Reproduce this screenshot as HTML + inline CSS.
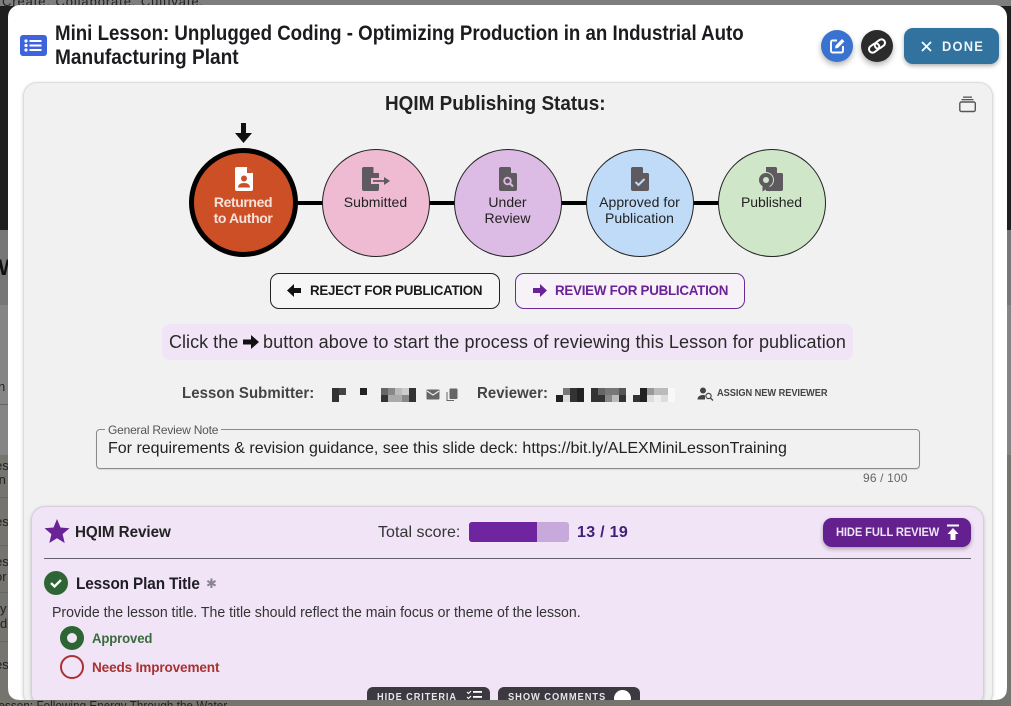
<!DOCTYPE html>
<html><head><meta charset="utf-8"><style>
html,body{margin:0;padding:0;overflow:hidden;width:1011px;height:706px}
body{position:relative;background:#7f7f7f;font-family:"Liberation Sans",sans-serif;color:#1c1b1f}
#w{position:absolute;left:0;top:0;width:1011px;height:706px;overflow:hidden}
.a{position:absolute}
.t{position:absolute;white-space:nowrap;transform-origin:0 50%}
.c{position:absolute;width:106px;height:106px;border-radius:50%;border:1px solid #222;top:149px;box-sizing:content-box}
.l{position:absolute;height:4px;background:#000;top:201px}
.ct{position:absolute;width:108px;text-align:center;font-size:14px;line-height:16px;white-space:nowrap;color:#222}
</style></head><body><div id="w">
<div class="a" style="left:0;top:0;width:1011px;height:230px;background:#1f1f1f"></div>
<div class="a" style="left:0;top:0;width:1011px;height:6px;background:#7d7f7c"></div>
<div class="a" style="left:0;top:230px;width:1011px;height:75px;background:#777"></div>
<div class="a" style="left:0;top:305px;width:1011px;height:150px;background:#858585"></div>
<div class="a" style="left:0;top:455px;width:1011px;height:251px;background:#76746e"></div>
<div class="a" style="left:0;top:404px;width:8px;height:1px;background:#666"></div>
<div class="a" style="left:0;top:497px;width:8px;height:1px;background:#666"></div>
<div class="a" style="left:0;top:545px;width:8px;height:1px;background:#666"></div>
<div class="a" style="left:0;top:592px;width:8px;height:1px;background:#666"></div>
<div class="a" style="left:0;top:641px;width:8px;height:1px;background:#666"></div>
<div class="t" style="left:2px;top:-6px;font-size:13px;letter-spacing:.9px;color:#222">Create. Collaborate. Cultivate.</div>
<div class="t" style="left:-2px;top:255px;font-size:22px;font-weight:bold;color:#111">W</div>
<div class="t" style="left:-2px;top:379px;font-size:13px;color:#222">n</div>
<div class="t" style="left:-5px;top:459px;font-size:13px;line-height:14px;color:#222">es<br>&nbsp;n</div>
<div class="t" style="left:-5px;top:514px;font-size:13px;color:#222">es</div>
<div class="t" style="left:-5px;top:554px;font-size:13px;line-height:15px;color:#222">es<br>or</div>
<div class="t" style="left:0px;top:601px;font-size:13px;line-height:15px;color:#222">y<br>d</div>
<div class="t" style="left:-5px;top:657px;font-size:13px;color:#222">es</div>

<!-- modal -->
<div class="a" style="left:8px;top:5px;width:999px;height:695px;background:#fff;border-radius:12px;overflow:hidden"></div>

<!-- header -->
<svg class="a" style="left:19px;top:35px" width="29" height="22" viewBox="0 0 29 22"><rect x="1" y="0" width="27" height="21" rx="3" fill="#3d63dd"/><g fill="#fff"><circle cx="7" cy="6" r="1.600"/><circle cx="7" cy="10.500" r="1.600"/><circle cx="7" cy="15" r="1.600"/><rect x="10.500" y="5" width="12" height="2"/><rect x="10.500" y="9.500" width="12" height="2"/><rect x="10.500" y="14" width="12" height="2"/></g></svg>
<div class="t" style="left:55px;top:22px;font-size:21px;line-height:24px;font-weight:bold;color:#1c1b1f;transform:scaleX(.89)">Mini Lesson: Unplugged Coding - Optimizing Production in an Industrial Auto</div>
<div class="t" style="left:55px;top:46px;font-size:21px;line-height:24px;font-weight:bold;color:#1c1b1f;transform:scaleX(.91)">Manufacturing Plant</div>

<div class="a" style="left:821px;top:30px;width:32px;height:32px;border-radius:50%;background:#3a72d0;box-shadow:0 3px 6px rgba(0,0,0,.3)"></div>
<svg class="a" style="left:826px;top:35px" width="22" height="22" viewBox="0 0 22 22"><path d="M11 5.500H6.500A1.500 1.500 0 0 0 5 7v9a1.500 1.500 0 0 0 1.500 1.500h9A1.500 1.500 0 0 0 17 16v-5" fill="none" stroke="#fff" stroke-width="1.900"/><path d="M9 13.500l.6-3L16 4l2.400 2.400-6.400 6.500z" fill="#fff"/></svg>
<div class="a" style="left:861px;top:30px;width:32px;height:32px;border-radius:50%;background:#2b2b2b;box-shadow:0 3px 6px rgba(0,0,0,.3)"></div>
<svg class="a" style="left:866px;top:35px" width="22" height="22" viewBox="0 0 22 22"><g fill="none" stroke="#fff" stroke-width="2" transform="rotate(-35 11 11)"><rect x="2" y="7.500" width="11" height="7" rx="3.500"/><rect x="9" y="7.500" width="11" height="7" rx="3.500"/></g></svg>
<div class="a" style="left:904px;top:28px;width:95px;height:36px;border-radius:9px;background:#31729f;box-shadow:0 2px 4px rgba(0,0,0,.3)"></div>
<svg class="a" style="left:920px;top:40px" width="13" height="13" viewBox="0 0 13 13"><path d="M2 2l9 9M11 2l-9 9" stroke="#fff" stroke-width="1.800"/></svg>
<div class="t" style="left:942px;top:38px;font-size:14px;font-weight:bold;color:#eef3f7;letter-spacing:1.300px;transform:scaleX(.92)">DONE</div>

<!-- status panel -->
<div class="a" style="left:23px;top:82px;width:970px;height:625px;background:#f1f1f1;border:1px solid #dcdcdc;border-radius:14px;box-sizing:border-box;box-shadow:0 1px 3px rgba(0,0,0,.18)"></div>
<div class="t" style="left:385px;top:93px;font-size:20px;font-weight:bold;color:#222;transform:scaleX(.945)">HQIM Publishing Status:</div>
<svg class="a" style="left:958px;top:95px" width="19" height="18" viewBox="0 0 19 18"><rect x="1.800" y="7" width="15.500" height="9.500" rx="1.500" fill="none" stroke="#555" stroke-width="1.400"/><rect x="3.500" y="4" width="12" height="1.300" fill="#555"/><rect x="5" y="1.500" width="9" height="1.300" fill="#555"/></svg>

<!-- arrow -->
<svg class="a" style="left:234px;top:122px" width="19" height="23" viewBox="0 0 19 23"><path d="M7 1h5v10h6l-8.500 10L1 11h6z" fill="#111"/></svg>

<!-- stepper -->
<div class="l" style="left:296px;width:27px"></div>
<div class="l" style="left:428px;width:27px"></div>
<div class="l" style="left:560px;width:27px"></div>
<div class="l" style="left:692px;width:27px"></div>
<div class="a" style="left:189px;top:148px;width:109px;height:109px;border-radius:50%;border:5px solid #000;background:#cc4f26;box-sizing:border-box"></div>
<div class="c" style="left:322px;background:#eebbd2"></div>
<div class="c" style="left:454px;background:#dcbbe4"></div>
<div class="c" style="left:586px;background:#bfdbf7"></div>
<div class="c" style="left:718px;background:#cfe6c9"></div>

<svg class="a" style="left:234px;top:166px" width="20" height="26" viewBox="0 0 20 26"><path d="M3 1h10l6 6v16a2 2 0 0 1-2 2H3a2 2 0 0 1-2-2V3a2 2 0 0 1 2-2z" fill="#fff"/><path d="M13 1v6h6z" fill="#cc4f26"/><circle cx="10" cy="12.500" r="3" fill="#cc4f26"/><path d="M4 21.500c0-3 2.500-4.500 6-4.500s6 1.500 6 4.500z" fill="#cc4f26"/></svg>
<svg class="a" style="left:361px;top:166px" width="30" height="26" viewBox="0 0 30 26"><path d="M3 1h9l6 6v16a2 2 0 0 1-2 2H3a2 2 0 0 1-2-2V3a2 2 0 0 1 2-2z" fill="#5f5a60"/><path d="M12.500 1v6h5.500z" fill="#eebbd2"/><rect x="10" y="12" width="9" height="6" fill="#eebbd2"/><path d="M12 15h12" stroke="#5f5a60" stroke-width="1.800"/><path d="M23 11l6 4-6 4z" fill="#5f5a60"/></svg>
<svg class="a" style="left:498px;top:166px" width="20" height="26" viewBox="0 0 20 26"><path d="M3 1h9l7 7v15a2 2 0 0 1-2 2H3a2 2 0 0 1-2-2V3a2 2 0 0 1 2-2z" fill="#5f5a60"/><path d="M13 1v6h6z" fill="#dcbbe4"/><circle cx="9.500" cy="15" r="3.300" fill="none" stroke="#dcbbe4" stroke-width="1.800"/><path d="M12 17.500l3 3" stroke="#dcbbe4" stroke-width="2"/></svg>
<svg class="a" style="left:630px;top:166px" width="20" height="26" viewBox="0 0 20 26"><path d="M3 1h9l7 7v15a2 2 0 0 1-2 2H3a2 2 0 0 1-2-2V3a2 2 0 0 1 2-2z" fill="#5f5a60"/><path d="M13 1v6h6z" fill="#bfdbf7"/><path d="M5.500 16l3 3 6-6" fill="none" stroke="#bfdbf7" stroke-width="2"/></svg>
<svg class="a" style="left:758px;top:166px" width="27" height="26" viewBox="0 0 27 26"><path d="M8 1h10l7 7v15a2 2 0 0 1-2 2H8z" fill="#5f5a60"/><path d="M19 1v6h6z" fill="#cfe6c9"/><circle cx="8" cy="14" r="7.500" fill="#5f5a60" stroke="#cfe6c9" stroke-width="1"/><circle cx="8" cy="14" r="3" fill="#cfe6c9"/><path d="M4.500 20v5.500L8 23.500l3.500 2V20z" fill="#5f5a60"/></svg>

<div class="ct" style="left:189px;top:194px;color:#f6e2da;font-weight:bold;letter-spacing:-.4px">Returned<br>to Author</div>
<div class="ct" style="left:321.500px;top:194px;letter-spacing:.05px">Submitted</div>
<div class="ct" style="left:453.500px;top:194px;letter-spacing:0">Under<br>Review</div>
<div class="ct" style="left:585.500px;top:194px;letter-spacing:.05px">Approved for<br>Publication</div>
<div class="ct" style="left:717.500px;top:194px;letter-spacing:-.05px">Published</div>

<!-- buttons -->
<div class="a" style="left:270px;top:273px;width:230px;height:36px;border:1px solid #222;border-radius:9px;box-sizing:border-box;background:#f6f6f6"></div>
<svg class="a" style="left:287px;top:284px" width="15" height="13" viewBox="0 0 15 13"><path d="M14 4v5H7v4L0 6.500 7 0v4z" fill="#111"/></svg>
<div class="t" style="left:310px;top:282px;font-size:14px;font-weight:bold;color:#1a1a1a;letter-spacing:-.27px;transform:scaleX(.95)">REJECT FOR PUBLICATION</div>
<div class="a" style="left:515px;top:273px;width:230px;height:36px;border:1px solid #6a2a97;border-radius:9px;box-sizing:border-box;background:#f6f2f8"></div>
<svg class="a" style="left:532px;top:284px" width="15" height="13" viewBox="0 0 15 13"><path d="M1 4v5h7v4l7-6.500L8 0v4z" fill="#6a2397"/></svg>
<div class="t" style="left:555px;top:282px;font-size:14px;font-weight:bold;color:#6a2397;letter-spacing:-.27px;transform:scaleX(.955)">REVIEW FOR PUBLICATION</div>

<div class="a" style="left:162px;top:324px;width:691px;height:36px;background:#f0e4f6;border-radius:8px"></div>
<div class="t" style="left:169px;top:332px;font-size:18px;color:#2a2a2a;letter-spacing:.03px">Click the</div>
<svg class="a" style="left:242px;top:335px" width="17" height="14" viewBox="0 0 17 14"><path d="M1 4.500v5h8V14l8-7-8-7v4.500z" fill="#111"/></svg>
<div class="t" style="left:263px;top:332px;font-size:18px;color:#2a2a2a;letter-spacing:.09px">button above to start the process of reviewing this Lesson for publication</div>

<!-- people -->
<div class="t" style="left:182px;top:385px;font-size:16px;font-weight:bold;color:#444;letter-spacing:.05px;transform:scaleX(.936)">Lesson Submitter:</div>
<svg class="a" style="left:332px;top:388px" width="86" height="14" viewBox="0 0 86 14" shape-rendering="crispEdges"><rect x="0" y="0" width="7" height="14" fill="#333"/><rect x="7" y="0" width="7" height="7" fill="#444"/><rect x="28" y="0" width="7" height="7" fill="#222"/><rect x="49" y="0" width="7" height="7" fill="#666"/><rect x="56" y="0" width="7" height="7" fill="#888"/><rect x="63" y="0" width="7" height="7" fill="#bbb"/><rect x="70" y="0" width="7" height="7" fill="#ccc"/><rect x="77" y="0" width="7" height="7" fill="#333"/><rect x="49" y="7" width="7" height="7" fill="#333"/><rect x="56" y="7" width="7" height="7" fill="#aaa"/><rect x="63" y="7" width="7" height="7" fill="#aaa"/><rect x="70" y="7" width="7" height="7" fill="#888"/><rect x="77" y="7" width="7" height="7" fill="#333"/></svg>
<svg class="a" style="left:426px;top:389px" width="14" height="11" viewBox="0 0 14 11"><rect x="0.500" y="0.500" width="13" height="10" rx="1" fill="#666"/><path d="M1 2l6 4 6-4" fill="none" stroke="#f1f1f1" stroke-width="1.100"/></svg>
<svg class="a" style="left:446px;top:388px" width="12" height="14" viewBox="0 0 12 14"><path d="M1 4v8.500h7" fill="none" stroke="#666" stroke-width="1"/><rect x="3.500" y="0.500" width="8" height="10.500" rx="1" fill="#666"/></svg>
<div class="t" style="left:477px;top:385px;font-size:16px;font-weight:bold;color:#444;letter-spacing:.05px;transform:scaleX(.934)">Reviewer:</div>
<svg class="a" style="left:556px;top:388px" width="120" height="14" viewBox="0 0 120 14" shape-rendering="crispEdges"><rect x="0" y="7" width="7" height="7" fill="#222"/><rect x="7" y="0" width="7" height="7" fill="#777"/><rect x="7" y="7" width="7" height="7" fill="#ddd"/><rect x="14" y="0" width="7" height="14" fill="#333"/><rect x="21" y="0" width="7" height="14" fill="#222"/><rect x="35" y="0" width="7" height="14" fill="#333"/><rect x="42" y="0" width="7" height="7" fill="#666"/><rect x="42" y="7" width="7" height="7" fill="#333"/><rect x="49" y="0" width="7" height="7" fill="#777"/><rect x="49" y="7" width="7" height="7" fill="#888"/><rect x="56" y="0" width="7" height="7" fill="#777"/><rect x="56" y="7" width="7" height="7" fill="#bbb"/><rect x="63" y="0" width="7" height="7" fill="#555"/><rect x="63" y="7" width="7" height="7" fill="#333"/><rect x="77" y="7" width="7" height="7" fill="#333"/><rect x="84" y="0" width="7" height="14" fill="#222"/><rect x="91" y="0" width="7" height="7" fill="#999"/><rect x="91" y="7" width="7" height="7" fill="#ddd"/><rect x="98" y="0" width="7" height="7" fill="#bbb"/><rect x="98" y="7" width="7" height="7" fill="#eee"/><rect x="105" y="0" width="7" height="7" fill="#bbb"/><rect x="105" y="7" width="7" height="7" fill="#ddd"/><rect x="112" y="0" width="7" height="14" fill="#f8f8f8"/></svg>
<svg class="a" style="left:697px;top:387px" width="17" height="14" viewBox="0 0 17 14"><circle cx="6" cy="3.500" r="3" fill="#444"/><path d="M0.500 12.500c0-3 2.500-4.500 5.500-4.500 1 0 1.500.2 2 .4v4.100z" fill="#444"/><circle cx="11.500" cy="9" r="2.600" fill="none" stroke="#444" stroke-width="1.200"/><path d="M13.500 11l2.500 2.500" stroke="#444" stroke-width="1.300"/></svg>
<div class="t" style="left:717px;top:388px;font-size:10px;font-weight:bold;color:#444;letter-spacing:-.06px;transform:scaleX(.925)">ASSIGN NEW REVIEWER</div>

<!-- note -->
<div class="a" style="left:96px;top:429px;width:824px;height:40px;border:1px solid #8a8a8a;border-radius:4px;box-sizing:border-box;box-shadow:0 1px 1px rgba(0,0,0,.1)"></div>
<div class="t" style="left:105px;top:423px;font-size:12px;line-height:14px;color:#555;background:#f1f1f1;padding:0 3px;letter-spacing:-.2px">General Review Note</div>
<div class="t" style="left:108px;top:440px;font-size:16px;color:#222;letter-spacing:0">For requirements &amp; revision guidance, see this slide deck: https://bit.ly/ALEXMiniLessonTraining</div>
<div class="t" style="left:863px;top:471px;font-size:12px;color:#666;letter-spacing:.15px">96 / 100</div>

<!-- review -->
<div class="a" style="left:31px;top:506px;width:953px;height:201px;background:#f0e4f6;border:1px solid #d5d0d8;border-radius:14px;box-sizing:border-box;box-shadow:0 1px 3px rgba(0,0,0,.2)"></div>
<svg class="a" style="left:44px;top:518px" width="26" height="26" viewBox="0 0 26 26"><path d="M13 1l3.500 8.500 9 .7-6.900 5.900 2.100 8.900L13 20.300l-7.700 4.700 2.100-8.900L.5 10.200l9-.7z" fill="#6a2397"/></svg>
<div class="t" style="left:75px;top:524px;font-size:16px;font-weight:bold;color:#222;letter-spacing:-.05px;transform:scaleX(.95)">HQIM Review</div>
<div class="t" style="left:378px;top:524px;font-size:16px;color:#333;letter-spacing:.05px">Total score:</div>
<div class="a" style="left:469px;top:522px;width:100px;height:20px;background:#c7aadb;border-radius:3px;overflow:hidden"><div style="width:68px;height:20px;background:#6f259f"></div></div>
<div class="t" style="left:577px;top:524px;font-size:16px;font-weight:bold;color:#45207a;letter-spacing:.3px">13 / 19</div>
<div class="a" style="left:823px;top:518px;width:148px;height:29px;background:#64208f;border-radius:9px;box-shadow:0 2px 4px rgba(0,0,0,.3)"></div>
<div class="t" style="left:836px;top:525px;font-size:12px;font-weight:bold;color:#eee4f4;letter-spacing:-.12px;transform:scaleX(.928)">HIDE FULL REVIEW</div>
<svg class="a" style="left:946px;top:524px" width="14" height="17" viewBox="0 0 14 17"><rect x="1" y="0.500" width="12" height="2" fill="#fff"/><path d="M7 4l5.500 6H9.500v6h-5v-6H1.500z" fill="#fff"/></svg>
<div class="a" style="left:44px;top:558px;width:927px;height:1px;background:#665f6c"></div>

<svg class="a" style="left:44px;top:571px" width="24" height="24" viewBox="0 0 24 24"><circle cx="12" cy="12" r="12" fill="#2e6534"/><path d="M7 12l3.500 3.500L17 9" fill="none" stroke="#fff" stroke-width="2.300"/></svg>
<div class="t" style="left:76px;top:574px;font-size:17px;font-weight:bold;color:#1e1c24;letter-spacing:-.12px;transform:scaleX(.9)">Lesson Plan Title</div>
<div class="t" style="left:206px;top:575px;font-size:13px;line-height:18px;color:#8a8490">&#10033;</div>
<div class="t" style="left:52px;top:605px;font-size:14.500px;color:#333;letter-spacing:-.03px;transform:scaleX(.974)">Provide the lesson title. The title should reflect the main focus or theme of the lesson.</div>

<div class="a" style="left:60px;top:626px;width:24px;height:24px;border-radius:50%;background:#2e6534"></div>
<div class="a" style="left:67px;top:633px;width:10px;height:10px;border-radius:50%;background:#f0e4f6"></div>
<div class="t" style="left:92px;top:630px;font-size:14px;font-weight:bold;color:#3a6b3e;letter-spacing:-.15px;transform:scaleX(.94)">Approved</div>
<div class="a" style="left:60px;top:655px;width:24px;height:24px;border-radius:50%;border:2px solid #a83232;box-sizing:border-box"></div>
<div class="t" style="left:92px;top:659px;font-size:14px;font-weight:bold;color:#a83232;letter-spacing:-.15px;transform:scaleX(.97)">Needs Improvement</div>

<div class="a" style="left:367px;top:687px;width:123px;height:14px;background:#3c3a40;border-radius:6px 6px 0 0"></div>
<div class="t" style="left:377px;top:692px;font-size:10px;font-weight:bold;color:#e8e6ea;letter-spacing:1px;transform:scaleX(.92)">HIDE CRITERIA</div>
<svg class="a" style="left:466px;top:690px" width="16" height="10" viewBox="0 0 16 10"><path d="M1 2l1.500 1.500L5 1M1 7l1.500 1.500L5 6" fill="none" stroke="#fff" stroke-width="1.100"/><rect x="7" y="1" width="9" height="1.800" fill="#fff"/><rect x="7" y="6" width="9" height="1.800" fill="#fff"/></svg>
<div class="a" style="left:498px;top:687px;width:142px;height:14px;background:#3c3a40;border-radius:6px 6px 0 0"></div>
<div class="t" style="left:508px;top:692px;font-size:10px;font-weight:bold;color:#e8e6ea;letter-spacing:1px;transform:scaleX(.933)">SHOW COMMENTS</div>
<div class="a" style="left:614px;top:690px;width:17px;height:17px;border-radius:50%;background:#fff"></div>

<!-- crop below modal -->
<div class="a" style="left:0;top:700px;width:1011px;height:6px;background:#76746e;overflow:hidden"><div class="t" style="left:-8px;top:-2px;font-size:13px;color:#222;letter-spacing:.1px;transform:scaleX(.89)">Lesson: Following Energy Through the Water</div></div>
<div class="a" style="left:8px;top:690px;width:10px;height:10px;background:radial-gradient(circle at 100% 0,#fff 0,#fff 9.500px,#76746e 10px)"></div>
<div class="a" style="left:997px;top:690px;width:10px;height:10px;background:radial-gradient(circle at 0 0,#fff 0,#fff 9.500px,#76746e 10px)"></div>
</div></body></html>
